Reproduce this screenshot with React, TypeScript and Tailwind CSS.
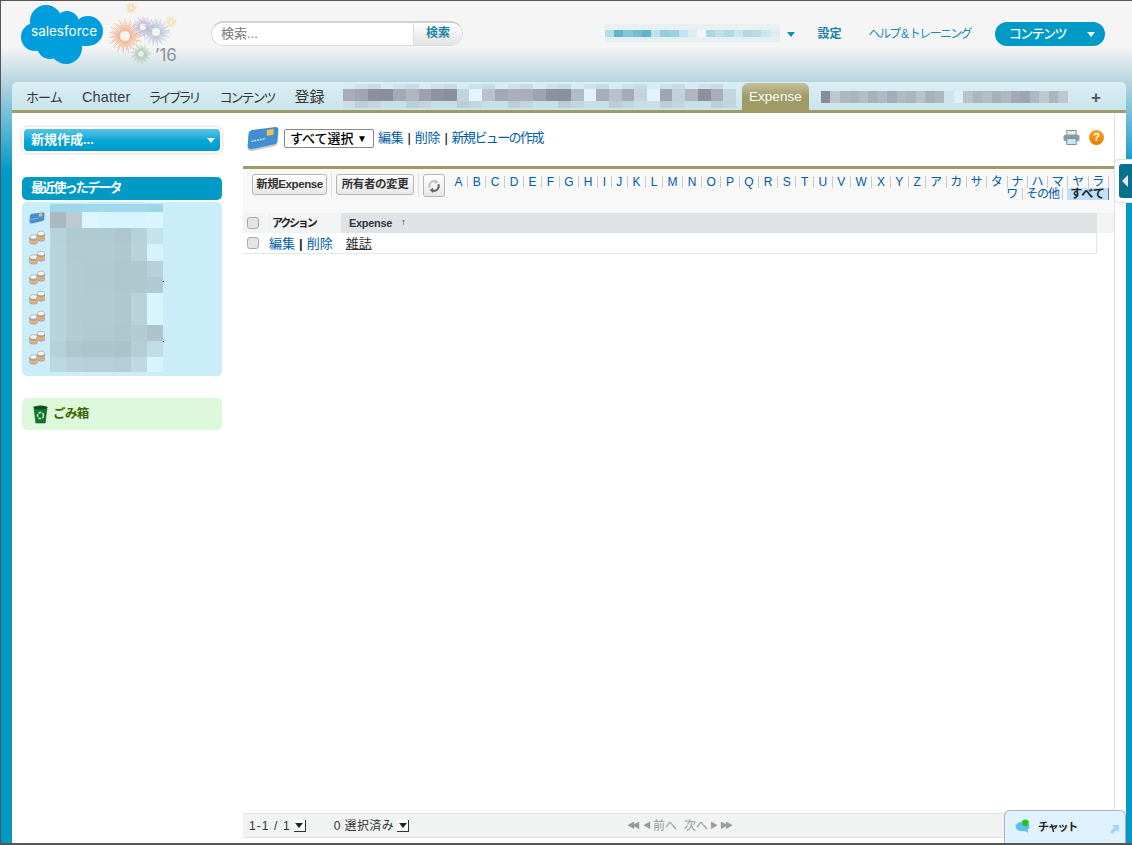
import React from "react";

const FONT = "font-['Liberation_Sans','Noto_Sans_CJK_JP',sans-serif]";

function Mosaic({ rows, cell, heights }: { rows: string[][]; cell: number; heights: number[] }) {
  return (
    <div className="flex flex-col shrink-0">
      {rows.map((r, i) => (
        <div key={i} className="flex" style={{ height: heights[i] }}>
          {r.map((c, j) => (
            <div key={j} style={{ width: cell, background: c }} />
          ))}
        </div>
      ))}
    </div>
  );
}

function Cloud() {
  return (
    <div className="relative w-[84px] h-[60px] shrink-0">
      <svg viewBox="0 0 84 60" className="absolute inset-0 w-full h-full">
        <g fill="#009ddc">
          <circle cx="26" cy="17" r="16" />
          <circle cx="47" cy="19" r="12" />
          <circle cx="68" cy="27" r="15" />
          <circle cx="15" cy="33" r="14" />
          <circle cx="46" cy="44" r="16" />
          <circle cx="30" cy="42" r="13" />
          <rect x="18" y="18" width="50" height="24" />
        </g>
      </svg>
      <span className="absolute left-[11px] top-[18px] text-white text-[13.5px] leading-[18px] font-['Inter',sans-serif]">salesforce</span>
    </div>
  );
}

function Burst({ cx, cy, r, color, n = 26 }: { cx: number; cy: number; r: number; color: string; n?: number }) {
  const lines = [];
  for (let i = 0; i < n; i++) {
    const a = (i / n) * Math.PI * 2;
    const k = i % 3 === 0 ? 1 : i % 3 === 1 ? 0.82 : 0.65;
    lines.push(
      <line key={i} x1={cx + Math.cos(a) * r * 0.3} y1={cy + Math.sin(a) * r * 0.3} x2={cx + Math.cos(a) * r * k} y2={cy + Math.sin(a) * r * k} stroke={color} strokeWidth="0.7" opacity="0.75" />
    );
  }
  return <g>{lines}</g>;
}

function Fireworks() {
  return (
    <svg viewBox="0 0 70 64" className="absolute left-0 top-0 w-[70px] h-[64px]">
      <Burst cx={16} cy={35} r={17} color="#f4935a" n={56} />
      <Burst cx={34} cy={26} r={11} color="#b7a3cf" n={40} />
      <Burst cx={47} cy={31} r={14} color="#a3b4d0" n={52} />
      <Burst cx={32} cy={53} r={10} color="#9cc39a" n={40} />
      <Burst cx={22} cy={7} r={6} color="#f0d183" n={26} />
      <Burst cx={62} cy={21} r={6} color="#f5d98a" n={26} />
    </svg>
  );
}

function ContentIcon() {
  return (
    <svg viewBox="0 0 16 15" className="w-4 h-[15px]">
      <g stroke="#8a8a8a" strokeWidth="0.5">
        <path d="M8 4 V9 A4 2.2 0 0 0 16 9 V4 Z" fill="#c99a62" />
        <path d="M0.5 7.5 V12 A4 2.2 0 0 0 8.5 12 V7.5 Z" fill="#c99a62" />
        <path d="M8 6 A4 2.2 0 0 0 16 6 M8 8 A4 2.2 0 0 0 16 8" fill="none" stroke="#f1e6d5" />
        <path d="M0.5 9.5 A4 2.2 0 0 0 8.5 9.5 M0.5 11 A4 2.2 0 0 0 8.5 11" fill="none" stroke="#f1e6d5" />
        <ellipse cx="12" cy="3.5" rx="3.8" ry="2.3" fill="#f1f1f1" />
        <ellipse cx="4.5" cy="7" rx="3.8" ry="2.3" fill="#f1f1f1" />
      </g>
    </svg>
  );
}

function CardIcon({ w, h }: { w: number; h: number }) {
  return (
    <svg viewBox="0 0 34 26" style={{ width: w, height: h }}>
      <path d="M6 5 L30 1 Q33 1 33 4 L32 17 Q32 19 29 20 L6 25 Q1 25 1 22 L2 9 Q2 6 6 5Z" fill="#c9ccd0" />
      <path d="M6 3 L30 0 Q33 0 33 3 L32 15 Q32 17 29 18 L6 23 Q1 23 1 20 L2 7 Q2 4 6 3Z" fill="#3f8fd2" />
      <rect x="21" y="6" width="7" height="6" fill="#f3c14c" transform="skewY(-8)" />
      <path d="M5 15 L20 12" stroke="#cfe6f7" strokeWidth="1.6" strokeDasharray="2 1" />
    </svg>
  );
}

function Caret({ className }: { className: string }) {
  return <span className={"inline-block w-0 h-0 border-l-[4px] border-r-[4px] border-t-[5px] border-l-transparent border-r-transparent " + className} />;
}

const CB = () => <span className="w-[12px] h-[12px] rounded-[3px] border border-[#a8a8a8] bg-[#e4e4e4] shrink-0 block" />;

const ALPHA = "A B C D E F G H I J K L M N O P Q R S T U V W X Y Z ア カ サ タ ナ ハ マ ヤ ラ ワ その他".split(" ");

const S = (...c: string[]) => c;
const sideRows: string[][] = [
  S("#9dd6e8", "#9dd6e8", "#a0d9eb", "#a0d9eb", "#a0d9eb", "#a0d9eb", "#9dd6e8"),
  S("#a9b9bd", "#bccbcf", "#dcf6ff", "#d6f4fe", "#d6f4fe", "#d6f4fe", "#d9f5fe"),
  S("#b7d2db", "#b0cad2", "#b0cad2", "#b0cad2", "#aec7cf", "#b7d1d9", "#c5e3ec"),
  S("#b7d3dc", "#b1cbd3", "#b1cbd3", "#b1cbd3", "#afc8d0", "#b8d2da", "#d6f3fc"),
  S("#b7d3dc", "#b2ccd4", "#b0cad2", "#b0cad2", "#aec7cf", "#aec8d0", "#b7d1da"),
  S("#b7d3dc", "#b2ccd4", "#b0cad2", "#b0cad2", "#aec7cf", "#aec8d0", "#b0cad2"),
  S("#b7d3dc", "#b2ccd4", "#b1cbd3", "#b1cbd3", "#afc8d0", "#b8d2da", "#d8f4fd"),
  S("#b7d3dc", "#b2ccd4", "#b1cbd3", "#b1cbd3", "#afc8d0", "#b8d2da", "#d8f4fd"),
  S("#b7d3dc", "#b2ccd4", "#b0cad2", "#b0cad2", "#aec7cf", "#b2ccd4", "#aec3ca"),
  S("#b5d0d9", "#aec7cf", "#acc5cd", "#acc5cd", "#aac3cb", "#b4ced6", "#c0dde6"),
  S("#bbd8e1", "#b7d2da", "#b5d0d8", "#b5d0d8", "#b3ced6", "#bed9e1", "#d8f4fd"),
];
const sideH = [8, 16, 16, 17, 16, 16, 16, 16, 16, 16, 15];

const tabA = ["#a7acb8", "#a0a6b2", "#8c909d", "#8a8e9b", "#a4a9b5", "#afb6c0", "#9ca1ad", "#8f93a0", "#8b8f9c", "#c2d4de", "#e2f6fb", "#b9c2cc", "#a2a8b4", "#a9aeba", "#a9aeba", "#9da3af", "#8d919e", "#8a8f9c", "#b0bbc6", "#dff3f8", "#a7adb9", "#b6c1cb", "#a6abb7", "#c3d4dc", "#dff3f8", "#9fa5b1", "#c1d1da", "#afb6c0", "#8c909d", "#a8adb9", "#c1d6de"];
const tabRows = [
  tabA.map((_, i) => (i % 3 === 0 ? "#d6ecf2" : i % 3 === 1 ? "#cce2e9" : "#c6dbe2")),
  tabA, tabA.map(c => c),
  tabA.map((_, i) => (i % 4 === 1 ? "#b9cfd5" : i % 4 === 2 ? "#c0d6dc" : "#c8dfe5")),
];
const tab2A = ["#8a8a9b", "#bcc7cf", "#b0b7c0", "#adb4be", "#b5bcc5", "#a9b0ba", "#b2b9c2", "#a5acb7", "#b2b9c2", "#adb4be", "#b9c3cb", "#a9b0ba", "#b0b7c0", "#cfe3ea", "#dcf0f5", "#b8c2ca", "#aeb5bf", "#b5bcc5", "#a9b0ba", "#b0b7c0", "#a4a9b5", "#9fa5b0", "#b0b7c0", "#bcc7cf", "#adb4be", "#bcc7cf"];
const userA = ["#b8dbe8", "#5fb2d0", "#85c5db", "#72bcd6", "#5fb2d0", "#bde0ea", "#94cce0", "#9ad0e1", "#c5e3ec", "#d9edf3", "#f5f5f5", "#a9d5e4", "#bde0ea", "#b0d9e6", "#c9e5ee", "#b0d9e6", "#b6dce8", "#c9e5ee", "#dcedf2"];
const userRows = [userA.map(c => "#e7f1f4"), userA, userA.map(c => "#e3eff3")];

export default function App() {
  return (
    <div className={"relative w-[1132px] h-[845px] overflow-hidden bg-[linear-gradient(to_bottom,#b6d5e0_81px,#0099c6_170px)] border-t border-l border-b-2 border-[#555] text-[12px] text-[#222] " + FONT}>
      {/* header */}
      <div className="h-[81px] bg-gradient-to-b from-[#f5f5f5] from-[56%] to-[#b6d5e0] flex items-start pl-[19px] relative">
        <div className="mt-[3px]"><Cloud /></div>
        <div className="relative w-[72px] h-[64px] ml-[5px]">
          <Fireworks />
          <span className="absolute left-[46px] top-[44px] text-[17px] leading-[20px] text-[#8b9198] font-['Inter',sans-serif]">’16</span>
        </div>
        <div className="ml-[30px] mt-[20px] flex h-[25px] w-[252px] rounded-full border border-[#dcdcdc] border-t-2 border-t-[#d0d0d0] overflow-hidden bg-white">
          <span className="w-[201px] pl-[9px] text-[13px] leading-[21px] text-[#777]">検索...</span>
          <span className="flex-1 text-center text-[12px] font-bold leading-[21px] text-[#1a86ad] bg-gradient-to-b from-white to-[#e3e3e3] border-l border-[#dcdcdc]">検索</span>
        </div>
        <div className="ml-[142px] mt-[23px]">
          <Mosaic rows={userRows} cell={9.2} heights={[6, 7, 5]} />
        </div>
        <Caret className="border-t-[#0b8cb8] ml-[7px] mt-[31px]" />
        <span className="ml-[23px] mt-[25px] text-[12px] leading-[16px] font-bold text-[#1b7fa6]">設定</span>
        <span className="ml-[27px] mt-[25px] text-[12px] leading-[16px] text-[#1b8bb2] tracking-[-1.7px] whitespace-nowrap">ヘルプ &amp; トレーニング</span>
        <div className="ml-[24px] mt-[21px] w-[110px] h-[24px] rounded-full bg-[#009ac6] flex items-center pl-[14px] pr-[10px] justify-between">
          <span className="text-white text-[13px] leading-[16px] font-medium tracking-[-1.6px]">コンテンツ</span>
          <Caret className="border-t-white" />
        </div>
      </div>

      {/* tab bar */}
      <div className="ml-[11px] mr-[6px] h-[31px] rounded-t-[5px] bg-gradient-to-b from-[#dceef4] to-[#c9e4ec] border-b-[3px] border-[#a09a66] flex items-end pl-[14px] text-[13px] text-[#333]">
        <div className="flex h-[28px] items-center whitespace-nowrap">
          <span className="tracking-[-0.9px] pt-[3px]">ホーム</span>
          <span className="ml-[20px] text-[14.5px] tracking-[0.15px] text-[#3a3a4a] pt-[3px]">Chatter</span>
          <span className="ml-[18px] tracking-[-3px] pt-[3px]">ライブラリ</span>
          <span className="ml-[21px] tracking-[-2px] pt-[3px]">コンテンツ</span>
          <span className="ml-[20px] text-[15px] pt-[3px]">登録</span>
          <div className="ml-[18px]">
            <Mosaic rows={tabRows} cell={12.7} heights={[5, 6, 6, 7]} />
          </div>
        </div>
        <div className="ml-[6px] w-[67px] h-[27px] rounded-t-[6px] bg-gradient-to-b from-[#c6c19c] via-[#a09a66] to-[#a09a66] text-white text-[13.5px] flex items-center justify-center pt-[2px]">Expense</div>
        <div className="ml-[12px] self-center mb-[-2px]">
          <Mosaic rows={[tab2A, tab2A]} cell={9.5} heights={[6, 6]} />
        </div>
        <span className="ml-[23px] self-center mb-[-2px] text-[17px] font-bold text-[#555] leading-none">+</span>
      </div>

      {/* body */}
      <div className="ml-[11px] mr-[6px] h-[730px] bg-white flex">
        {/* sidebar */}
        <div className="w-[231px] shrink-0 pl-[10px] pr-[21px] pt-[14px]">
          <div className="h-[26px] rounded-[6px] border-2 border-white shadow-[0_0_3px_#bbb] bg-gradient-to-b from-[#55c4e4] via-[#00a8d6] to-[#0099c6] flex items-center justify-between pl-[7px] pr-[5px]">
            <span className="text-white font-bold text-[13px] leading-none pb-[2px]">新規作成...</span>
            <Caret className="border-t-white" />
          </div>
          <div className="mt-[24px] h-[23px] rounded-[5px] bg-[#009ac6] text-white font-bold text-[13px] leading-[21px] pl-[9px] tracking-[-1.8px]">最近使ったデータ</div>
          <div className="relative mt-[2px] h-[174px] rounded-[5px] bg-[#cbedf9] flex pt-[2px]">
            <div className="w-[28px] pl-[7px] pt-[8px] flex flex-col gap-[5px]">
              <CardIcon w={16} h={13} />
              {[0, 1, 2, 3, 4, 5, 6].map(i => <ContentIcon key={i} />)}
            </div>
            <Mosaic rows={sideRows} cell={16.2} heights={sideH} />
            <span className="absolute left-[141px] top-[79px] w-px h-px bg-black" />
            <span className="absolute left-[141px] top-[139px] w-px h-px bg-black" />
          </div>
          <div className="mt-[22px] h-[32px] rounded-[5px] bg-[#dcf9dc] flex items-center pl-[11px] gap-[5px]">
            <svg viewBox="0 0 16 20" className="w-[15px] h-[19px]">
              <path d="M1 2 H15 L13 19 H3 Z" fill="#0d7a2c" stroke="#0a4f1d" strokeWidth="0.6" />
              <ellipse cx="8" cy="2.5" rx="7.5" ry="2" fill="#0a4f1d" />
              <circle cx="8" cy="11" r="3.2" fill="none" stroke="#d7efd9" strokeWidth="1.5" strokeDasharray="3 1.2" />
            </svg>
            <span className="text-[12.5px] font-bold text-[#3d6400] leading-none tracking-[-0.6px]">ごみ箱</span>
          </div>
        </div>

        {/* main */}
        <div className="w-[872px] shrink-0 border-r border-[#dde2e2] flex flex-col">
          <div className="h-[53px] flex items-start pl-[3px] pt-[14px] shrink-0 relative">
            <CardIcon w={34} h={25} />
            <div className="ml-[4px] mt-[2px] h-[19px] w-[90px] border border-[#888] rounded-[2px] bg-white flex items-center pl-[5px] pr-[6px] justify-between text-[13px] font-medium text-black">
              <span>すべて選択</span>
              <span className="text-[10px]">▼</span>
            </div>
            <div className="ml-[4px] mt-[2px] text-[13px] leading-[18px] text-[#015ba7] flex tracking-[-0.2px] whitespace-nowrap">
              <span>編集</span>
              <span className="mx-[4px] text-black">|</span>
              <span>削除</span>
              <span className="mx-[4px] text-black">|</span>
              <span className="tracking-[-1.6px]">新規ビューの作成</span>
            </div>
            <div className="ml-auto mr-[10px] mt-[3px] flex items-center gap-[9px]">
              <svg viewBox="0 0 18 16" className="w-[17px] h-[15px]">
                <rect x="4" y="0.5" width="10" height="5" fill="#e8eef0" stroke="#7b8a92" />
                <rect x="0.5" y="5" width="17" height="7" rx="2" fill="#8d9aa2" />
                <rect x="4" y="9" width="10" height="6.5" fill="#c5e6f3" stroke="#7b8a92" />
              </svg>
              <span className="w-[15px] h-[15px] rounded-full bg-gradient-to-b from-[#f7a623] to-[#e07b00] text-white text-[11px] font-bold flex items-center justify-center leading-none">?</span>
            </div>
          </div>

          {/* list */}
          <div className="flex-1 border-t-[3px] border-[#a09a66] flex flex-col min-h-0">
            <div className="h-[44px] bg-[#f8f8f8] flex items-start pl-[9px] relative">
              <div className="mt-[5px] h-[21px] w-[75px] border border-[#b5b5b5] rounded-[3px] bg-gradient-to-b from-white to-[#e8e8e8] text-[11.5px] font-bold text-[#333] leading-[19px] text-center whitespace-nowrap tracking-[-0.4px]">新規Expense</div>
              <div className="w-px h-[24px] mt-[4px] mx-[4px] bg-[#ddd]" />
              <div className="mt-[5px] h-[21px] w-[78px] border border-[#b5b5b5] rounded-[3px] bg-gradient-to-b from-white to-[#e8e8e8] text-[11.5px] font-bold text-[#333] leading-[19px] text-center whitespace-nowrap tracking-[-0.4px]">所有者の変更</div>
              <div className="w-px h-[24px] mt-[4px] mx-[4px] bg-[#ddd]" />
              <div className="mt-[5px] h-[23px] w-[22px] border border-[#b5b5b5] rounded-[3px] bg-gradient-to-b from-white to-[#e8e8e8] flex items-center justify-center">
                <svg viewBox="0 0 16 16" className="w-[14px] h-[14px]" fill="none" strokeWidth="2.4">
                  <path d="M3 10 A5.5 5.5 0 0 1 10 2.8" stroke="#c5c5c5" />
                  <path d="M13 6 A5.5 5.5 0 0 1 6 13.2" stroke="#666" />
                  <path d="M9 0 L13 3.5 L9 6 Z" fill="#c5c5c5" />
                  <path d="M7 16 L3 12.5 L7 10 Z" fill="#666" />
                </svg>
              </div>
              <div className="absolute left-[206px] top-[7px] w-[660px] flex flex-wrap justify-end text-[12px] leading-[12px] text-[#015ba7]">
                {ALPHA.map(a => (
                  <span key={a} className={"border-r border-[#ccc] text-center " + (a.length === 1 && a >= "A" && a <= "Z" ? "px-[4.6px]" : a.length === 1 ? "w-[20.3px]" : "px-[3px] tracking-[-1px]")}>{a}</span>
                ))}
                <span className="ml-[4px] w-[42px] h-[12px] bg-[#bfe0fb] border-r border-[#777] text-center font-bold text-[#222]">すべて</span>
              </div>
            </div>

            <div className="h-[20px] bg-[#dfe3e5] flex items-center text-[11px] font-bold text-[#222] relative">
              <div className="w-[23px] bg-[#f2f3f3] h-full flex items-center pl-[4px]"><CB /></div>
              <div className="w-[75px] bg-[#f2f3f3] h-full flex items-center pl-[5px] border-l border-[#fff] tracking-[-2.2px]">アクション</div>
              <div className="pl-[8px] text-[#334] flex items-center tracking-[-0.3px]">Expense<span className="ml-[9px] text-[9px] text-[#222]">↑</span></div>
              <div className="absolute right-0 top-0 w-[17px] h-full bg-[#f2f3f3]" />
            </div>
            <div className="h-[21px] mr-[17px] flex items-center border-b border-r border-[#e3e6e6] text-[13px] leading-none">
              <div className="w-[26px] pl-[4px] shrink-0"><CB /></div>
              <span className="text-[#015ba7]">編集</span>
              <span className="mx-[4px] font-bold">|</span>
              <span className="text-[#015ba7]">削除</span>
              <span className="ml-[13px] underline text-[#333]">雑誌</span>
            </div>
            <div className="flex-1" />

            <div className="h-[25px] bg-[#f1f3f3] border-t border-[#dde2e2] border-b flex items-center pl-[6px] text-[12px] text-[#333] relative">
              <span className="tracking-[1.1px]">1-1 / 1</span>
              <span className="ml-[3px] w-[12px] h-[12px] bg-white border-r border-b border-[#333] flex items-center justify-center"><Caret className="border-t-[#222]" /></span>
              <span className="ml-[28px] tracking-[0.4px]">0 選択済み</span>
              <span className="ml-[3px] w-[12px] h-[12px] bg-white border-r border-b border-[#333] flex items-center justify-center"><Caret className="border-t-[#222]" /></span>
              <div className="absolute left-[384px] top-[4px] flex items-center gap-[2px] text-[#999] text-[12px] leading-[16px]">
                <span className="text-[8px] tracking-[-3px]">◀◀</span>
                <span className="text-[8px] ml-[4px]">◀</span>
                <span>前へ</span>
                <span className="ml-[5px]">次へ</span>
                <span className="text-[8px]">▶</span>
                <span className="text-[8px] tracking-[-3px]">▶▶</span>
              </div>
            </div>
            <div className="h-[5px]" />
          </div>
        </div>
      </div>

      {/* sidebar handle */}
      <div className="absolute left-[1113px] top-[158px] w-[19px] h-[44px] rounded-l-[5px] bg-white border border-[#ddd] border-r-0 pl-[4px] py-[4px]">
        <div className="h-full bg-[#07718f] rounded-l-[3px] flex items-center pl-[3px]">
          <span className="w-0 h-0 border-y-[6px] border-y-transparent border-r-[6px] border-r-[#e8e8e8]" />
        </div>
      </div>

      {/* chat */}
      <div className="absolute left-[1003px] top-[809px] w-[122px] h-[36px] rounded-t-[6px] bg-[#e0f2fe] border border-[#a9b4ba] border-b-0 flex items-start pl-[10px] pt-[8px]">
        <svg viewBox="0 0 18 16" className="w-[17px] h-[15px]">
          <ellipse cx="8" cy="8" rx="7.5" ry="5" fill="#5cc0ea" />
          <path d="M9 12 L14 15 L13 10 Z" fill="#5cc0ea" />
          <circle cx="11" cy="4" r="3.6" fill="#22c31f" />
        </svg>
        <span className="ml-[6px] text-[11px] font-bold text-[#222] leading-[16px] tracking-[-1.2px]">チャット</span>
        <svg viewBox="0 0 10 10" className="absolute right-[5px] top-[13px] w-[10px] h-[10px]">
          <path d="M2 1 H9 V8 L7 6 L2 10 L0 8 L4 3.5 Z" fill="#a6d6ee" />
        </svg>
      </div>
    </div>
  );
}
